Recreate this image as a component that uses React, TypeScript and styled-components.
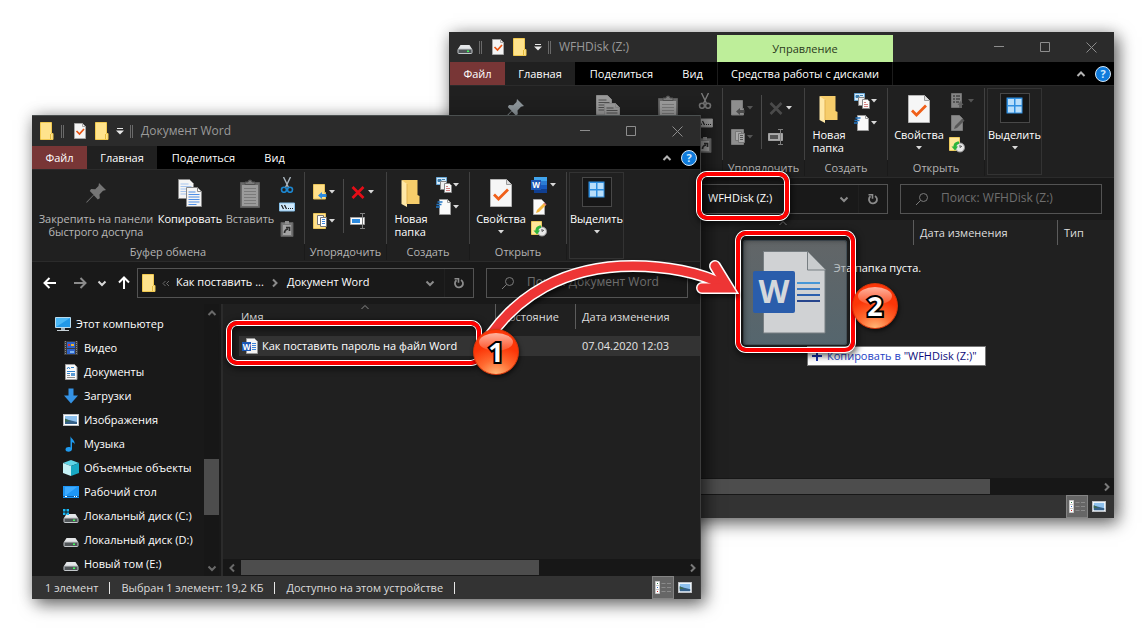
import React from 'react';
import styled, { createGlobalStyle, css } from 'styled-components';

const GlobalStyle = createGlobalStyle`
  * { box-sizing: border-box; }
  body {
    margin: 0;
    background: #ffffff;
    font-family: "Open Sans", "Noto Sans", sans-serif;
    font-size: 12px;
    line-height: 16px;
    color: #ffffff;
  }
  button, input { font: inherit; color: inherit; border: 0; padding: 0; background: none; }
  svg { display: block; flex: none; }
`;

/* ---------- desktop and windows ---------- */

const Desktop = styled.main`
  position: relative;
  width: 100%;
  min-height: 100vh;
  overflow: hidden;
`;

const WindowFrame = styled.section<{ $back?: boolean }>`
  position: absolute;
  display: flex;
  flex-direction: column;
  background: #202020;
  box-shadow: 4px 5px 16px rgba(0, 0, 0, 0.6), 0 0 16px rgba(0, 0, 0, 0.12);
  ${(p) =>
    p.$back
      ? css`
          left: 449px;
          top: 32px;
          width: 665px;
          border-left: 1px solid #2b2b2b;
        `
      : css`
          left: 32px;
          top: 115px;
          width: 669px;
          border-top: 1px solid #4a4f4f;
          border-right: 1px solid #3c3c3c;
        `}
`;

const TitleBar = styled.header`
  display: flex;
  align-items: center;
  height: 30px;
  background: #2b2b2b;
`;

const QuickAccess = styled.div`
  display: flex;
  align-items: center;
  padding-left: 7px;
`;

const QuickButton = styled.button<{ $w?: number }>`
  display: flex;
  justify-content: center;
  width: ${(p) => p.$w ?? 16}px;
`;

const DoubleBar = styled.span`
  width: 3px;
  height: 13px;
  margin: 0 8px 0 6px;
  border: 1px solid #6a6a6a;
  border-width: 0 1px;
`;

const TitleText = styled.h1`
  margin: 0;
  font-size: 12px;
  font-weight: 400;
  line-height: 16px;
  white-space: nowrap;
  color: #9a9a9a;
`;

const TitleLead = styled.div<{ $fixed?: boolean }>`
  display: flex;
  align-items: center;
  ${(p) => (p.$fixed ? 'width: 267px;' : '')}
`;

const ContextTitle = styled.div`
  width: 176px;
  height: 27px;
  align-self: flex-end;
  line-height: 28px;
  text-align: center;
  font-size: 11px;
  color: #2c3a20;
  background: #beee9a;
`;

const Controls = styled.div`
  display: flex;
  margin-left: auto;
`;

const ControlButton = styled.button`
  display: flex;
  align-items: center;
  justify-content: center;
  width: 46px;
  height: 28px;
`;

const TabRow = styled.nav`
  display: flex;
  height: 23px;
  background: #000000;
`;

const Tab = styled.button<{ $kind?: 'file' | 'active' | 'context'; $w: number }>`
  width: ${(p) => p.$w}px;
  font-size: 11px;
  line-height: 23px;
  white-space: nowrap;
  text-align: center;
  ${(p) => p.$kind === 'file' && 'background: #783636;'}
  ${(p) => p.$kind === 'active' && 'background: #202020;'}
  ${(p) => p.$kind === 'context' && 'border: 1px solid #1c1c1c; border-width: 0 1px;'}
`;

const TabTools = styled.div`
  display: flex;
  align-items: center;
  gap: 9px;
  margin-left: auto;
  padding-right: 3px;
`;

/* ---------- ribbon ---------- */

const Ribbon = styled.div`
  display: flex;
  padding: 2px 0 1px;
  border-top: 1px solid #2b2b2b;
  border-bottom: 1px solid #2b2b2b;
  background: #202020;
`;

const Group = styled.section<{ $w: number }>`
  width: ${(p) => p.$w}px;
`;

const GroupBody = styled.div<{ $pad?: number }>`
  display: flex;
  height: 72px;
  padding-left: ${(p) => p.$pad ?? 4}px;
  border-right: 1px solid #414141;
`;

const GroupLabel = styled.h2`
  margin: 0;
  height: 16px;
  font-size: 11px;
  font-weight: 400;
  line-height: 16px;
  text-align: center;
  white-space: nowrap;
  color: #b4b4b4;
  border-right: 1px solid #1a1a1a;
`;

const BigButton = styled.button<{ $w: number; $dim?: boolean; $left?: boolean; $framed?: boolean }>`
  display: flex;
  flex-direction: column;
  align-items: center;
  width: ${(p) => p.$w}px;
  padding-top: ${(p) => (p.$framed ? 4 : 5)}px;
  font-size: 11px;
  line-height: 13px;
  white-space: nowrap;
  text-align: ${(p) => (p.$left ? 'left' : 'center')};
  color: ${(p) => (p.$dim ? '#b8b8b8' : '#ffffff')};
`;

const BigIcon = styled.span`
  display: flex;
  align-items: center;
  justify-content: center;
  height: 32px;
  margin-bottom: 3px;
`;

const CaretRow = styled.span`
  display: flex;
  align-items: center;
  height: 13px;
`;

const SmallColumn = styled.div<{ $top: number; $gap: number; $left: number }>`
  display: flex;
  flex-direction: column;
  gap: ${(p) => p.$gap}px;
  padding: ${(p) => p.$top}px 0 0 ${(p) => p.$left}px;
`;

const SmallButton = styled.button`
  display: flex;
  align-items: center;
  gap: 1px;
  height: 16px;
`;

const InnerRule = styled.span`
  width: 1px;
  height: 54px;
  margin: 7px 0 0 8px;
  background: #4a4a4a;
`;

const SelectGroup = styled.section`
  display: flex;
  justify-content: center;
  width: 55px;
  height: 87px;
  margin-left: 2px;
  border: 1px solid #333333;
`;

const SelectIcon = styled.span`
  display: flex;
  justify-content: center;
  width: 30px;
  height: 30px;
  margin-bottom: 2px;
  padding-top: 3px;
  border: 1px solid #484848;
  background: #161616;
`;

/* ---------- address row ---------- */

const NavRow = styled.div`
  display: flex;
  align-items: center;
  height: 42px;
  padding: 0 12px 0 10px;
  background: #191919;
`;

const NavButtons = styled.div`
  display: flex;
  align-items: center;
  width: 95px;
  gap: 8px;
`;

const NavButton = styled.button<{ $w?: number; $first?: boolean }>`
  display: flex;
  justify-content: center;
  width: ${(p) => p.$w ?? 16}px;
  margin-right: ${(p) => (p.$first ? 6 : 0)}px;
`;

const AddressBox = styled.div<{ $offset: number }>`
  display: flex;
  align-items: center;
  flex: 1;
  min-width: 0;
  height: 30px;
  padding-left: ${(p) => p.$offset}px;
  border: 1px solid #535353;
  white-space: nowrap;
`;

const Crumb = styled.a`
  padding-bottom: 2px;
  color: #ffffff;
  font-size: 11px;
  text-decoration: none;
`;

const CrumbMark = styled.span<{ $w: number }>`
  display: flex;
  justify-content: center;
  width: ${(p) => p.$w}px;
`;

const AddressTools = styled.div`
  display: flex;
  height: 28px;
  margin-left: auto;
`;

const AddressButton = styled.button`
  display: flex;
  align-items: center;
  justify-content: center;
  width: 29px;
  & + & { border-left: 1px solid #202020; }
`;

const SearchBox = styled.label`
  display: flex;
  align-items: center;
  gap: 12px;
  width: 202px;
  height: 30px;
  margin-left: 12px;
  padding-left: 14px;
  border: 1px solid #535353;
`;

const SearchInput = styled.input`
  flex: 1;
  min-width: 0;
  padding-bottom: 2px;
  font-size: 12px;
  outline: 0;
  &::placeholder { color: #6e6e6e; opacity: 1; }
`;

/* ---------- body ---------- */

const Body = styled.div<{ $min?: number }>`
  display: flex;
  min-height: ${(p) => p.$min ?? 0}px;
`;

const Sidebar = styled.aside`
  display: flex;
  width: 191px;
  padding-right: 2px;
  border-right: 2px solid #2b2b2b;
  background: #191919;
`;

const PlaceList = styled.ul`
  flex: 1;
  min-width: 0;
  margin: 0;
  padding: 8px 0 0;
  list-style: none;
`;

const Place = styled.a<{ $root?: boolean }>`
  display: flex;
  align-items: center;
  gap: 5px;
  height: 24px;
  padding-left: ${(p) => (p.$root ? 23 : 31)}px;
  font-size: 11px;
  white-space: nowrap;
  color: #ffffff;
  text-decoration: none;
`;

const VScroll = styled.div`
  display: flex;
  flex-direction: column;
  width: 15px;
  background: #171717;
`;

const VThumb = styled.div`
  height: 56px;
  margin: 138px 0 auto;
  background: #4d4d4d;
`;

const ScrollButton = styled.button`
  display: flex;
  align-items: center;
  justify-content: center;
  flex: none;
  min-width: 15px;
  height: 17px;
`;

const Content = styled.div`
  display: flex;
  flex-direction: column;
  flex: 1;
  min-width: 0;
  background: #202020;
`;

const FileTable = styled.table`
  width: calc(100% - 16px);
  margin-left: 16px;
  border-collapse: collapse;
  table-layout: fixed;
  font-size: 11px;
  tbody::before { content: ''; display: block; height: 7px; }
`;

const HeadCell = styled.th<{ $w?: number; $rule?: boolean }>`
  position: relative;
  ${(p) => (p.$w ? `width: ${p.$w}px;` : '')}
  height: 25px;
  padding: 0 0 0 6px;
  font-weight: 400;
  text-align: left;
  white-space: nowrap;
  color: #dedede;
  box-shadow: ${(p) => (p.$rule ? 'inset -1px 0 #5c5c5c' : 'none')};
  &:first-child { padding-left: 2px; }
`;

const SortMark = styled.span`
  position: absolute;
  top: -2px;
  left: calc(50% - 8px);
`;

const FileRow = styled.tr`
  height: 20px;
  background: #333333;
  color: #e4e4e4;
  td { padding: 0 0 0 6px; white-space: nowrap; }
  td:first-child { padding-left: 3px; }
`;

const FileName = styled.span`
  display: flex;
  align-items: center;
  gap: 4px;
  color: #ffffff;
`;

const EmptyNote = styled.p`
  margin: 15px 0 0;
  font-size: 11px;
  text-align: center;
`;

const HScroll = styled.div`
  display: flex;
  height: 17px;
  margin-top: auto;
  padding-left: 1px;
  background: #171717;
`;

const HThumb = styled.div<{ $w: number }>`
  width: ${(p) => p.$w}px;
  height: 15px;
  margin: 1px auto 0 2px;
  background: #4d4d4d;
`;

const StatusBar = styled.footer`
  display: flex;
  align-items: center;
  height: 23px;
  padding: 0 4px 0 13px;
  font-size: 11px;
  white-space: nowrap;
  color: #dcdcdc;
  background: #333333;
`;

const StatusItem = styled.span`
  display: flex;
  align-items: center;
  padding-right: 11px;
  &::after {
    content: '';
    width: 1px;
    height: 12px;
    margin-left: 11px;
    background: #e6e6e6;
  }
`;

const ViewButtons = styled.div`
  display: flex;
  margin-left: auto;
`;

const ViewButton = styled.button<{ $on?: boolean }>`
  display: flex;
  align-items: center;
  justify-content: center;
  width: 22px;
  height: 23px;
  ${(p) => p.$on && 'background: #666666; border: 1px solid #838383;'}
`;

/* ---------- annotations ---------- */

const Highlight = styled.div<{ $x: number; $y: number; $w: number; $h: number }>`
  position: absolute;
  left: ${(p) => p.$x}px;
  top: ${(p) => p.$y}px;
  width: ${(p) => p.$w}px;
  height: ${(p) => p.$h}px;
  border: 4px solid #fe0000;
  border-radius: 10px;
  box-shadow: 0 0 0 1px #ffffff, inset 0 0 0 1px #ffffff, inset 2px 3px 6px 1px rgba(0, 0, 0, 0.6),
    1px 2px 6px 2px rgba(0, 0, 0, 0.6);
`;

const Badge = styled.div<{ $x: number; $y: number }>`
  position: absolute;
  left: ${(p) => p.$x}px;
  top: ${(p) => p.$y}px;
  display: flex;
  align-items: center;
  justify-content: center;
  width: 46px;
  height: 46px;
  border: 1px solid #d93408;
  border-radius: 50%;
  background: radial-gradient(ellipse 34px 28px at 50% 100%, #ffb878, #ff6a30 50%, #fc3608 100%);
  box-shadow: 1px 2px 4px rgba(0, 0, 0, 0.6);
  font-size: 27px;
  font-weight: 700;
  line-height: 44px;
  color: #ffffff;
  -webkit-text-stroke: 4px #000000;
  paint-order: stroke fill;
  &::before {
    content: '';
    position: absolute;
    top: 3px;
    left: 5px;
    width: 34px;
    height: 18px;
    border-radius: 50%;
    background: linear-gradient(rgba(255, 200, 185, 0.85), rgba(255, 120, 80, 0.4));
  }
  span { position: relative; }
`;

const DragGhost = styled.div`
  position: absolute;
  left: 743px;
  top: 240px;
  width: 104px;
  height: 105px;
  padding-top: 11px;
  border-radius: 3px;
  box-shadow: inset 0 0 0 1px #46525a;
  background: linear-gradient(rgba(142, 148, 151, 0.6), rgba(120, 148, 161, 0.6));
`;

const DropTip = styled.div`
  position: absolute;
  left: 807px;
  top: 346px;
  display: flex;
  align-items: center;
  gap: 5px;
  height: 20px;
  padding: 0 8px 0 4px;
  border: 1px solid #767676;
  font-size: 11px;
  white-space: nowrap;
  color: #1d3fc4;
  background: #ffffff;
  b { font-weight: 400; color: #0d0d7a; }
`;

const ArrowLayer = styled.svg`
  position: absolute;
  left: 0;
  top: 0;
  filter: drop-shadow(1px 3px 2px rgba(0, 0, 0, 0.6));
`;

/* ---------- icons ---------- */

const Svg: React.FC<{ w?: number; h?: number; children: React.ReactNode }> = ({ w = 16, h = 16, children }) => (
  <svg width={w} height={h} viewBox={`0 0 ${w} ${h}`} fill="none" aria-hidden="true">
    {children}
  </svg>
);

const FolderIcon = () => (
  <Svg w={14} h={18}>
    <path d="M.5.500h11v11h1.500v6H.5z" fill="#ffe38c" stroke="#f1c94f" />
    <path d="M10.500 12v5" stroke="#e3b93b" />
  </Svg>
);
const CheckDocIcon = () => (
  <Svg w={12} h={16}>
    <path d="M.5.5h8l3 3v12H.5z" fill="#f4f4f4" stroke="#a6a6a6" />
    <path d="M8.500.500v3h3" stroke="#a6a6a6" />
    <path d="M2.500 8l3 3 4.500-5" stroke="#e85312" strokeWidth="1.700" />
  </Svg>
);
const DriveIcon = ({ system = false }: { system?: boolean }) => (
  <Svg>
    <path d="M3.500 6h9l2.500 4H1z" fill="#e4e6e8" />
    <rect x="1" y="10" width="14" height="4.500" rx=".8" fill="#505558" stroke="#c3c7ca" />
    <rect x="10" y="11.500" width="2" height="1.500" fill="#3dff5a" />
    {system && <path d="M0 1h2.500v2.500H0zM3.500 1H6v2.500H3.500zM0 4.500h2.500V7H0zM3.500 4.500H6V7H3.500z" fill="#18b6f3" />}
  </Svg>
);
const Caret = ({ color = '#d8d8d8' }: { color?: string }) => (
  <Svg w={6} h={4}>
    <path d="M0 0h6L3 3.500z" fill={color} />
  </Svg>
);
const CustomizeIcon = () => (
  <Svg w={8} h={8}>
    <path d="M1 1.500h6" stroke="#e8e8e8" />
    <path d="M0 3.500h8L4 7.500z" fill="#e8e8e8" />
  </Svg>
);
const MinIcon = () => (
  <Svg w={10} h={10}><path d="M0 4.500h10" stroke="#8d8d8d" /></Svg>
);
const MaxIcon = () => (
  <Svg w={10} h={10}><path d="M.5.5h9v9h-9z" stroke="#8d8d8d" /></Svg>
);
const CloseIcon = () => (
  <Svg w={11} h={11}><path d="M.5.5l10 10M10.500.500l-10 10" stroke="#8d8d8d" /></Svg>
);
const HelpIcon = () => (
  <Svg>
    <circle cx="8" cy="8" r="7.500" fill="#0f7bdc" stroke="#d4e6f5" />
    <text x="8" y="12" textAnchor="middle" fontSize="11" fontWeight="700" fill="#cfeaff">?</text>
  </Svg>
);
const Chevron = ({ dir, color = '#8b8b8b', thick = 2 }: { dir: 'up' | 'down' | 'left' | 'right'; color?: string; thick?: number }) => {
  const d = { up: 'M1.500 7L5 3.500 8.500 7', down: 'M1.500 3.500L5 7l3.500-3.500', left: 'M7 1.500L3.500 5 7 8.500', right: 'M3 1.500L6.500 5 3 8.500' }[dir];
  return (
    <Svg w={10} h={10}><path d={d} stroke={color} strokeWidth={thick} /></Svg>
  );
};
const PinIcon = ({ light }: { light?: boolean }) => (
  <Svg w={20} h={20}>
    <path d="M13 0l7 7-3 .8-3.500 3.600.3 3.800-2 1.200-4-4.100L1.500 19 0 20l.8-1.600 6.700-6.700L3.800 8l1.200-2 4.200.3L12.500 3z" fill={light ? '#8e969b' : '#757575'} />
  </Svg>
);
const CopyIcon = ({ muted }: { muted?: boolean }) => {
  const fill = muted ? '#9a9a9a' : '#f4f4f4';
  const line = muted ? '#4f4f4f' : '#4f8fe6';
  return (
    <Svg w={24} h={28}>
      <path d="M.5.5h11l4 4v15H.500z" fill={fill} stroke="#8a8a8a" />
      <path d="M2.500 5h8M2.500 7.500h11M2.500 10h11M2.500 12.500h11M2.500 15h11" stroke={muted ? line : '#a5c4ef'} />
      <path d="M8.500 8.500h11l4 4v15h-15z" fill={fill} stroke="#8a8a8a" />
      <path d="M19.500 8.500v4h4" stroke="#8a8a8a" />
      <path d="M10.500 13h7M10.500 15.500h11M10.500 18h11M10.500 20.500h11M10.500 23h11M10.500 25.500h8" stroke={line} />
    </Svg>
  );
};
const PasteIcon = () => (
  <Svg w={20} h={29}>
    <path d="M.5 3.500h19v25H.5z" fill="#696969" stroke="#5a5a5a" />
    <path d="M2 6h16v21H2z" fill="#9b9b9b" />
    <path d="M5 5.500V3h3a2 2 0 0 1 4 0h3v2.500z" fill="#7c7c7c" stroke="#515151" />
    <path d="M4 9.500h12M4 12.500h12M4 15.500h12M4 18.500h12M4 21.500h12M4 24.500h12" stroke="#7a7a7a" />
  </Svg>
);
const CutIcon = ({ muted }: { muted?: boolean }) => (
  <Svg>
    <path d="M4.500 0l5 10.500M11.500 0L6.500 10.500" stroke={muted ? '#7a7a7a' : '#aab6bf'} strokeWidth="1.400" />
    <circle cx="5" cy="12.800" r="2.500" stroke={muted ? '#707070' : '#1c86cf'} strokeWidth="1.600" />
    <circle cx="11" cy="12.800" r="2.500" stroke={muted ? '#707070' : '#1c86cf'} strokeWidth="1.600" />
  </Svg>
);
const PathIcon = ({ muted }: { muted?: boolean }) => (
  <Svg>
    <path d="M.5 4h15v8H.5z" fill={muted ? '#9a9a9a' : '#cfe8fb'} stroke={muted ? '#858585' : '#85bfe8'} />
    <path d="M2.500 6l2 4M5.500 6l2 4" stroke="#1c1c1c" strokeWidth="1.200" />
    <path d="M9 9.500h1M11 9.500h1M13 9.500h1" stroke="#1c1c1c" />
  </Svg>
);
const ShortcutIcon = () => (
  <Svg>
    <path d="M2 1.500h12v14H2z" fill="#777" stroke="#5c5c5c" />
    <path d="M4 4h8v10H4z" fill="#a3a3a3" />
    <path d="M6 0h4v3H6z" fill="#8f8f8f" />
    <path d="M5.500 12c0-2 1-3.500 3.500-4M7 6.500h3.500V10" stroke="#2c2c2c" strokeWidth="1.700" />
  </Svg>
);
const MoveIcon = ({ muted }: { muted?: boolean }) => (
  <Svg>
    <path d="M1.500.5h11v8h1v6.500h-12z" fill={muted ? '#8e8e8e' : '#ffe08a'} stroke={muted ? '#7c7c7c' : '#e9c45a'} />
    <path d="M6 11.500l4-3.500v2h4.500v3H10v2z" fill={muted ? '#4c4c4c' : '#2d8be0'} />
  </Svg>
);
const CopyToIcon = ({ muted }: { muted?: boolean }) => (
  <Svg>
    <path d="M1.500.5h12v15h-12z" fill={muted ? '#8e8e8e' : '#ffe08a'} stroke={muted ? '#7c7c7c' : '#e9c45a'} />
    <path d="M5.500 2.500h6v9h-6z" fill={muted ? '#aaa' : '#fff'} stroke="#777" />
    <path d="M8.500 4.500h6v9h-6z" fill={muted ? '#aaa' : '#fff'} stroke="#777" />
    <path d="M10 6.500h3M10 8.500h3M10 10.500h3" stroke={muted ? '#555' : '#3f87dd'} />
  </Svg>
);
const DeleteIcon = ({ muted }: { muted?: boolean }) => (
  <Svg>
    <path d="M2.500 3l11 11M13.500 3l-11 11" stroke={muted ? '#4a4a4a' : '#e60d17'} strokeWidth="2.700" />
  </Svg>
);
const RenameIcon = ({ muted }: { muted?: boolean }) => (
  <Svg>
    <path d="M.5 4.500h14v7H.5z" fill={muted ? '#aaa' : '#fff'} stroke="#a0a0a0" />
    <path d="M2 6h8v4H2z" fill={muted ? '#555' : '#2d8be0'} />
    <path d="M12.500 1v14M10 .500h5M10 15.500h5" stroke="#808080" />
  </Svg>
);
const NewFolderIcon = () => (
  <Svg w={20} h={27}>
    <path d="M1 0h15.500v15l2 1v8H6z" fill="#f6cd6b" />
    <path d="M.5 0l5.500 4v23L.5 24z" fill="#ffe8a6" />
    <path d="M6 4v20" stroke="#e2b350" />
  </Svg>
);
const NewItemIcon = () => (
  <Svg>
    <path d="M.5.5h10v7H.5z" fill="#d8ecfa" stroke="#6aa9d8" />
    <path d="M2 2.500h3v2H2zM6 2.500h3" fill="#3f7fae" stroke="#3f7fae" />
    <path d="M4.500 4.500h6v8h-6z" fill="#eee" stroke="#888" />
    <path d="M8.500 6.500h5l2 2v7h-7z" fill="#fafafa" stroke="#888" />
    <path d="M10 9.500h2M10 11.500h4M10 13.500h4" stroke="#d48080" />
  </Svg>
);
const EasyAccessIcon = () => (
  <Svg>
    <path d="M3.500.5h8l3 3v12h-11z" fill="#fafafa" stroke="#9a9a9a" />
    <path d="M11.500.500v3h3" stroke="#9a9a9a" />
    <path d="M1.500 3h5M.5 5.500h5M0 8h4" stroke="#2276c4" strokeWidth="1.300" />
  </Svg>
);
const PropertiesIcon = () => (
  <Svg w={22} h={28}>
    <path d="M.5.5h16l5 5v22H.5z" fill="#f6f6f6" stroke="#b4b4b4" />
    <path d="M16.500.5v5h5" fill="#ddd" stroke="#9a9a9a" />
    <path d="M4 15.500l4.500 4.500L18 10.500" stroke="#f0601a" strokeWidth="2.800" />
  </Svg>
);
const WordOpenIcon = () => (
  <Svg>
    <path d="M3 0h13v4H3z" fill="#41a5ee" /><path d="M3 4h13v4H3z" fill="#2b7cd3" />
    <path d="M3 8h13v4H3z" fill="#185abd" /><path d="M3 12h13v4H3z" fill="#103f91" />
    <path d="M0 3h10v10H0z" fill="#1a56b4" />
    <text x="5" y="11" textAnchor="middle" fontSize="8" fontWeight="700" fill="#fff">W</text>
  </Svg>
);
const OpenMutedIcon = () => (
  <Svg>
    <path d="M2.500.5h10v14h-10z" fill="#858585" stroke="#707070" />
    <path d="M4 3h2M7 3h4M4 6h2M7 6h4M4 9h2M7 9h3" stroke="#444" strokeWidth="1.500" />
    <path d="M10 15v-3H8.500l3-4 3 4H13v3z" fill="#606060" />
  </Svg>
);
const EditIcon = ({ muted }: { muted?: boolean }) => (
  <Svg>
    <path d="M2.500.5h8l3 3v12h-11z" fill={muted ? '#8c8c8c' : '#fafafa'} stroke={muted ? '#777' : '#a6a6a6'} />
    <path d="M5 14l1-3 7-7 2 2-7 7z" fill={muted ? '#585858' : '#f4b63c'} />
    <path d="M12.500 4.500l1-1 2 2-1 1z" fill={muted ? '#585858' : '#d9787a'} />
  </Svg>
);
const HistoryIcon = () => (
  <Svg>
    <path d="M.5.5h10v7h1v6H.5z" fill="#ffe79a" stroke="#ecca5c" />
    <circle cx="11" cy="10.500" r="4.500" fill="#e8e8e8" stroke="#9a9a9a" />
    <path d="M11 8v2.500l2-1.500" stroke="#555" />
    <path d="M10 4.500C6 4.500 4.500 7 4.500 9.500H2.500l3.500 4 3-4H7.500C7.500 8 8.500 7 10 7z" fill="#2fb53c" />
  </Svg>
);
const SelectAllIcon = () => (
  <Svg w={17} h={17}>
    <path d="M.5.5h16v16H.5z" fill="#2f8fe0" />
    <path d="M2 2h6v6H2zM9.500 2h6v6h-6zM2 9.500h6v6H2zM9.500 9.500h6v6h-6z" fill="#b9defa" />
  </Svg>
);
const ArrowNav = ({ dir, color }: { dir: 'left' | 'right' | 'up'; color: string }) => {
  const d = { left: 'M14 8H3M7.500 3L2.500 8l5 5', right: 'M2 8h11M8.500 3l5 5-5 5', up: 'M8 14V3M3 7.500l5-5 5 5' }[dir];
  return (
    <Svg><path d={d} stroke={color} strokeWidth="2" /></Svg>
  );
};
const RefreshIcon = () => (
  <Svg w={12} h={12}>
    <path d="M8 3A4 4 0 1 1 3.500 3.300" stroke="#8b8b8b" strokeWidth="1.800" />
    <path d="M1.500 1.700h4v4" stroke="#8b8b8b" strokeWidth="1.600" />
  </Svg>
);
const SearchIcon = () => (
  <Svg w={14} h={14}>
    <circle cx="8.500" cy="5.500" r="4" stroke="#7b7b7b" />
    <path d="M5.500 8.500L1 13" stroke="#7b7b7b" />
  </Svg>
);
const LaquoIcon = () => (
  <Svg w={8} h={7}><path d="M3.500 1L1 3.500 3.500 6M7 1L4.500 3.500 7 6" stroke="#6a6a6a" /></Svg>
);
const ComputerIcon = () => (
  <Svg>
    <path d="M.5 1.500h15v10H.5z" fill="#4cb9f7" stroke="#b9dcf0" />
    <path d="M1 11L15 2v9z" fill="#2299e8" />
    <path d="M6 12h4v2H6z" fill="#9fb0ba" /><path d="M2 14.500h12" stroke="#c8d2d8" />
  </Svg>
);
const VideoIcon = () => (
  <Svg>
    <path d="M1 1h14v14H1z" fill="#3c3c3c" />
    <path d="M2.500 1v14M13.500 1v14" stroke="#8a8a8a" strokeDasharray="1 1" />
    <path d="M4 2h8v6H4zM4 9h8v5H4z" fill="#2f63c9" />
    <path d="M5 4h2v2H5z" fill="#d33" /><path d="M8 4h3v2H8z" fill="#f0b42c" /><path d="M7 11h4v2H7z" fill="#7fb4ef" />
  </Svg>
);
const DocumentIcon = () => (
  <Svg>
    <path d="M2.500.5h9l2.500 2.500v12.500H2.500z" fill="#fafafa" stroke="#a0a0a0" />
    <path d="M4 5l1.500-2L7 5M8 3.500h3M4 7.500h8M4 9.500h3" stroke="#3183cd" />
    <path d="M8 9h4v3H8z" fill="#5b9bd5" /><path d="M4 11.500h3M4 13.500h8" stroke="#909090" />
  </Svg>
);
const DownloadIcon = () => (
  <Svg><path d="M5.500.5h5v7h4.500L8 15.500 1 7.500h4.500z" fill="#3492e4" /></Svg>
);
const PictureIcon = ({ w = 16, h = 12 }: { w?: number; h?: number }) => (
  <svg width={w} height={h} viewBox="0 0 16 12" preserveAspectRatio="none" aria-hidden="true">
    <path d="M0 0h16v12H0z" fill="#b9bcc0" /><path d="M1 1h14v10H1z" fill="#ffffff" />
    <path d="M2 2h12v8H2z" fill="#8ec1ee" /><path d="M2 5l4 1 8 2v2H2z" fill="#35618a" />
    <path d="M2 4.500l4 2 2 .5-6 1z" fill="#3d6b52" />
  </svg>
);
const MusicIcon = () => (
  <Svg>
    <path d="M7.500 0c.5 3 5 4 4 8.500C11.500 7 10 6.300 9 6.200V13c0 3.500-6.500 3.500-6.500.5 0-2.200 3-3 5-2z" fill="#1f9bf0" />
  </Svg>
);
const CubeIcon = () => (
  <Svg>
    <path d="M8 0l8 3-8 3-8-3z" fill="#5fd4e6" /><path d="M0 3l8 3v10l-8-3z" fill="#c6f1f5" /><path d="M16 3L8 6v10l8-3z" fill="#18a9c4" />
  </Svg>
);
const DesktopIcon = () => (
  <Svg>
    <path d="M0 2h16v12H0z" fill="#1e96f5" /><path d="M2 12V3h12z" fill="#3eabff" />
    <path d="M0 12.500h16" stroke="#0b5fa8" /><path d="M2 12.500h2M11 12.500h1M13 12.500h1" stroke="#fff" />
  </Svg>
);
const WordFileIcon = () => (
  <Svg>
    <path d="M4.500.500h8l3 3v12h-11z" fill="#f4f4f4" stroke="#9a9a9a" />
    <path d="M10 5.500h4M10 7.500h4M10 9.500h4M10 11.500h4" stroke="#3b82d8" />
    <path d="M0 4h9v9H0z" fill="#1a56b4" />
    <text x="4.500" y="11.500" textAnchor="middle" fontSize="8" fontWeight="700" fill="#fff">W</text>
  </Svg>
);
const BigWordIcon = () => (
  <Svg w={84} h={85}>
    <path d="M20.500.5H64l18 18v63.500H20.500z" fill="#d0d2d4" stroke="#777e82" />
    <path d="M64.500 .5v18.500h18" fill="#c9ccce" stroke="#777e82" />
    <rect x="10" y="20" width="42" height="42" rx="2" fill="#2a5dab" />
    <text x="31" y="52" textAnchor="middle" fontSize="32" fontWeight="700" fill="#d4d8dc">W</text>
    <path d="M54 32h23" stroke="#4596d6" strokeWidth="2" /><path d="M54 38h23" stroke="#3b7cc4" strokeWidth="2" />
    <path d="M54 44h23" stroke="#2b5fae" strokeWidth="2" /><path d="M54 50h23" stroke="#26458c" strokeWidth="2" />
  </Svg>
);
const DetailsIcon = () => (
  <Svg w={16} h={14}>
    {[1, 5, 9].map((y, i) => (
      <g key={y}>
        <path d={`M.5 ${y - 0.5}h4v4h-4z`} fill="#fff" stroke="#c8c8c8" />
        <path d={`M2 ${y + 1}h1v1H2z`} fill={['#2d7a45', '#2a69c8', '#c22'][i]} />
        <path d={`M6.500 ${y + 1.5}h4M12 ${y + 1.5}h4`} stroke="#8a8a8a" />
      </g>
    ))}
  </Svg>
);

/* ---------- explorer ---------- */

type ExplorerProps = {
  back?: boolean;
  title: string;
  titleIcon: React.ReactNode;
  crumbs: React.ReactNode;
  crumbOffset: number;
  searchHint: string;
  places: { icon: React.ReactNode; name: string; root?: boolean }[];
  thumb: number;
  status: string[];
  minBody?: number;
  children: React.ReactNode;
};

const dimCaret = '#555555';

const Explorer = (p: ExplorerProps) => {
  const muted = p.back;
  return (
    <WindowFrame $back={p.back} aria-label={p.title}>
      <TitleBar>
        <TitleLead $fixed={p.back}>
          <QuickAccess>
            <QuickButton aria-label="Меню окна">{p.titleIcon}</QuickButton>
            <DoubleBar />
            <QuickButton aria-label="Свойства"><CheckDocIcon /></QuickButton>
            <QuickButton $w={28} aria-label="Новая папка"><FolderIcon /></QuickButton>
            <QuickButton $w={8} aria-label="Настройка панели"><CustomizeIcon /></QuickButton>
            <DoubleBar />
          </QuickAccess>
          <TitleText>{p.title}</TitleText>
        </TitleLead>
        {p.back && <ContextTitle>Управление</ContextTitle>}
        <Controls>
          <ControlButton aria-label="Свернуть"><MinIcon /></ControlButton>
          <ControlButton aria-label="Развернуть"><MaxIcon /></ControlButton>
          <ControlButton aria-label="Закрыть"><CloseIcon /></ControlButton>
        </Controls>
      </TitleBar>

      <TabRow>
        <Tab $kind="file" $w={55}>Файл</Tab>
        <Tab $kind="active" $w={70}>Главная</Tab>
        <Tab $w={93}>Поделиться</Tab>
        <Tab $w={49}>Вид</Tab>
        {p.back && <Tab $kind="context" $w={176}>Средства работы с дисками</Tab>}
        <TabTools>
          <Chevron dir="up" color="#b4b4b4" />
          <button aria-label="Справка"><HelpIcon /></button>
        </TabTools>
      </TabRow>

      <Ribbon>
        <Group $w={273}>
          <GroupBody>
            <BigButton $w={120} $dim>
              <BigIcon><PinIcon light={muted} /></BigIcon>
              <span>Закрепить на панели<br />быстрого доступа</span>
            </BigButton>
            <BigButton $w={68}>
              <BigIcon><CopyIcon muted={muted} /></BigIcon>
              Копировать
            </BigButton>
            <BigButton $w={52} $dim>
              <BigIcon><PasteIcon /></BigIcon>
              Вставить
            </BigButton>
            <SmallColumn $top={5} $gap={6} $left={3}>
              <SmallButton aria-label="Вырезать"><CutIcon muted={muted} /></SmallButton>
              <SmallButton aria-label="Скопировать путь"><PathIcon muted={muted} /></SmallButton>
              <SmallButton aria-label="Вставить ярлык"><ShortcutIcon /></SmallButton>
            </SmallColumn>
          </GroupBody>
          <GroupLabel>Буфер обмена</GroupLabel>
        </Group>
        <Group $w={82}>
          <GroupBody $pad={0}>
            <SmallColumn $top={12} $gap={13} $left={7}>
              <SmallButton aria-label="Переместить в"><MoveIcon muted={muted} /><Caret color={muted ? dimCaret : undefined} /></SmallButton>
              <SmallButton aria-label="Копировать в"><CopyToIcon muted={muted} /><Caret color={muted ? dimCaret : undefined} /></SmallButton>
            </SmallColumn>
            <InnerRule />
            <SmallColumn $top={12} $gap={13} $left={6}>
              <SmallButton aria-label="Удалить"><DeleteIcon muted={muted} /><span /><Caret /></SmallButton>
              <SmallButton aria-label="Переименовать"><RenameIcon muted={muted} /></SmallButton>
            </SmallColumn>
          </GroupBody>
          <GroupLabel>Упорядочить</GroupLabel>
        </Group>
        <Group $w={83}>
          <GroupBody>
            <BigButton $w={40} $left>
              <BigIcon><NewFolderIcon /></BigIcon>
              <span>Новая<br />папка</span>
            </BigButton>
            <SmallColumn $top={5} $gap={6} $left={5}>
              <SmallButton aria-label="Создать элемент"><NewItemIcon /><Caret /></SmallButton>
              <SmallButton aria-label="Простой доступ"><EasyAccessIcon /><Caret /></SmallButton>
            </SmallColumn>
          </GroupBody>
          <GroupLabel>Создать</GroupLabel>
        </Group>
        <Group $w={97}>
          <GroupBody>
            <BigButton $w={54}>
              <BigIcon><PropertiesIcon /></BigIcon>
              Свойства
              <CaretRow><Caret /></CaretRow>
            </BigButton>
            <SmallColumn $top={5} $gap={6} $left={3}>
              <SmallButton aria-label="Открыть">
                {muted ? <OpenMutedIcon /> : <WordOpenIcon />}<span /><span /><Caret color={muted ? dimCaret : undefined} />
              </SmallButton>
              <SmallButton aria-label="Изменить"><EditIcon muted={muted} /></SmallButton>
              <SmallButton aria-label="Журнал"><HistoryIcon /></SmallButton>
            </SmallColumn>
          </GroupBody>
          <GroupLabel>Открыть</GroupLabel>
        </Group>
        <SelectGroup>
          <BigButton $w={52} $framed>
            <BigIcon><SelectIcon><SelectAllIcon /></SelectIcon></BigIcon>
            Выделить
            <CaretRow><Caret /></CaretRow>
          </BigButton>
        </SelectGroup>
      </Ribbon>

      <NavRow>
        <NavButtons>
          <NavButton $first aria-label="Назад"><ArrowNav dir="left" color="#ffffff" /></NavButton>
          <NavButton aria-label="Вперёд"><ArrowNav dir="right" color="#8b8b8b" /></NavButton>
          <NavButton $w={12} aria-label="Последние"><Chevron dir="down" color="#d8d8d8" /></NavButton>
          <NavButton aria-label="Вверх"><ArrowNav dir="up" color="#ffffff" /></NavButton>
        </NavButtons>
        <AddressBox $offset={p.crumbOffset}>
          {p.crumbs}
          <AddressTools>
            <AddressButton aria-label="Предыдущие расположения"><Chevron dir="down" /></AddressButton>
            <AddressButton aria-label="Обновить"><RefreshIcon /></AddressButton>
          </AddressTools>
        </AddressBox>
        <SearchBox>
          <SearchIcon />
          <SearchInput type="text" placeholder={p.searchHint} aria-label="Поиск" />
        </SearchBox>
      </NavRow>

      <Body $min={p.minBody}>
        <Sidebar>
          <PlaceList>
            {p.places.map((pl) => (
              <li key={pl.name}><Place href="#" $root={pl.root}>{pl.icon}{pl.name}</Place></li>
            ))}
          </PlaceList>
          <VScroll>
            <ScrollButton aria-label="Прокрутить вверх"><Chevron dir="up" color="#6a6a6a" /></ScrollButton>
            <VThumb />
            <ScrollButton aria-label="Прокрутить вниз"><Chevron dir="down" color="#6a6a6a" /></ScrollButton>
          </VScroll>
        </Sidebar>
        <Content>
          {p.children}
          <HScroll>
            <ScrollButton aria-label="Прокрутить влево"><Chevron dir="left" color="#6a6a6a" /></ScrollButton>
            <HThumb $w={p.thumb} />
            <ScrollButton aria-label="Прокрутить вправо"><Chevron dir="right" color="#7a7a7a" /></ScrollButton>
          </HScroll>
        </Content>
      </Body>

      <StatusBar>
        {p.status.map((s) => <StatusItem key={s}>{s}</StatusItem>)}
        <ViewButtons>
          <ViewButton $on aria-label="Таблица"><DetailsIcon /></ViewButton>
          <ViewButton aria-label="Крупные значки"><PictureIcon w={14} h={11} /></ViewButton>
        </ViewButtons>
      </StatusBar>
    </WindowFrame>
  );
};

const places = [
  { icon: <ComputerIcon />, name: 'Этот компьютер', root: true },
  { icon: <VideoIcon />, name: 'Видео' },
  { icon: <DocumentIcon />, name: 'Документы' },
  { icon: <DownloadIcon />, name: 'Загрузки' },
  { icon: <PictureIcon />, name: 'Изображения' },
  { icon: <MusicIcon />, name: 'Музыка' },
  { icon: <CubeIcon />, name: 'Объемные объекты' },
  { icon: <DesktopIcon />, name: 'Рабочий стол' },
  { icon: <DriveIcon system />, name: 'Локальный диск (C:)' },
  { icon: <DriveIcon />, name: 'Локальный диск (D:)' },
  { icon: <DriveIcon />, name: 'Новый том (E:)' },
];

const ARC = 'M484 345C515 295 565 266 633 266C665 266 700 272 724 285';
const HEAD = 'M715 266L728.500 288L702 288';

export default function App() {
  return (
    <>
      <GlobalStyle />
      <Desktop>
        <Explorer
          back
          title="WFHDisk (Z:)"
          titleIcon={<DriveIcon />}
          crumbs={<Crumb href="#">WFHDisk (Z:)</Crumb>}
          crumbOffset={152}
          searchHint="Поиск: WFHDisk (Z:)"
          places={[]}
          thumb={331}
          status={[]}
          minBody={275}
        >
          <FileTable>
            <thead>
              <tr>
                <HeadCell $w={257} $rule><SortMark><Chevron dir="up" thick={1} /></SortMark></HeadCell>
                <HeadCell $w={144} $rule>Дата изменения</HeadCell>
                <HeadCell>Тип</HeadCell>
              </tr>
            </thead>
          </FileTable>
          <EmptyNote>Эта папка пуста.</EmptyNote>
        </Explorer>

        <Explorer
          title="Документ Word"
          titleIcon={<FolderIcon />}
          crumbs={
            <>
              <FolderIcon />
              <CrumbMark $w={20}><LaquoIcon /></CrumbMark>
              <Crumb href="#">Как поставить ...</Crumb>
              <CrumbMark $w={23}><Chevron dir="right" color="#8b8b8b" /></CrumbMark>
              <Crumb href="#">Документ Word</Crumb>
            </>
          }
          crumbOffset={4}
          searchHint="Поиск: Документ Word"
          places={places}
          thumb={298}
          status={['1 элемент', 'Выбран 1 элемент: 19,2 КБ', 'Доступно на этом устройстве']}
        >
          <FileTable>
            <thead>
              <tr>
                <HeadCell $w={257} $rule>Имя<SortMark><Chevron dir="up" thick={1} /></SortMark></HeadCell>
                <HeadCell $w={80} $rule>Состояние</HeadCell>
                <HeadCell>Дата изменения</HeadCell>
              </tr>
            </thead>
            <tbody>
              <FileRow>
                <td><FileName><WordFileIcon />Как поставить пароль на файл Word</FileName></td>
                <td />
                <td>07.04.2020 12:03</td>
              </FileRow>
            </tbody>
          </FileTable>
        </Explorer>

        <DropTip>
          <Svg w={10} h={10}><path d="M5 0v10M0 5h10" stroke="#1530a8" strokeWidth="2" /></Svg>
          <span>Копировать в <b>"WFHDisk (Z:)"</b></span>
        </DropTip>
        <DragGhost><BigWordIcon /></DragGhost>
        <Highlight $x={227} $y={321} $w={254} $h={44} />
        <Highlight $x={697} $y={172} $w={92} $h={48} />
        <Highlight $x={736} $y={231} $w={119} $h={121} />
        <ArrowLayer width="760" height="400" viewBox="0 0 760 400" fill="none" aria-hidden="true">
          <g strokeLinecap="round" stroke="#ffffff" strokeWidth="12">
            <path d={ARC} />
            <path d={HEAD} />
          </g>
          <g strokeLinecap="round" stroke="#ee3535" strokeWidth="9">
            <path d={ARC} />
            <path d={HEAD} />
          </g>
        </ArrowLayer>
        <Badge $x={473} $y={329}><span>1</span></Badge>
        <Badge $x={852} $y={283}><span>2</span></Badge>
      </Desktop>
    </>
  );
}
